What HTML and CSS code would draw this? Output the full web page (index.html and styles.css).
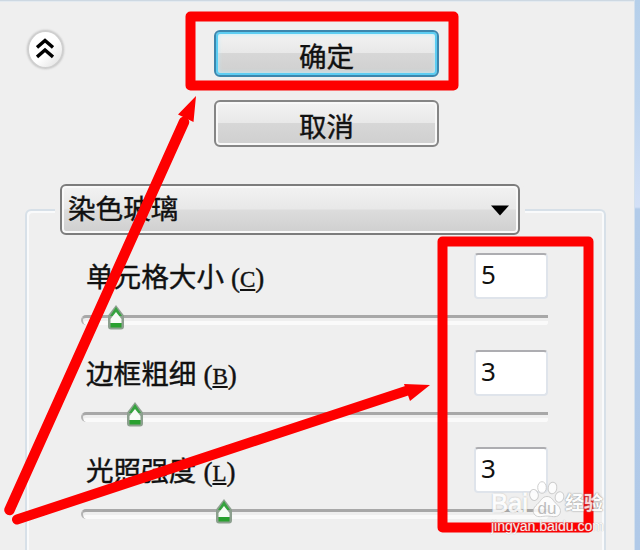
FILE: index.html
```html
<!DOCTYPE html>
<html lang="zh-CN">
<head>
    <meta charset="UTF-8">
    <meta name="viewport" content="width=device-width, initial-scale=1.0">
    <title>染色玻璃</title>
    <link rel="stylesheet" href="styles.css">
</head>
<body>
    <main class="panel">
        <header class="top">
            <button class="collapse" type="button">
                <svg width="18" height="21" viewBox="0 0 18 21" fill="none" stroke="#000" stroke-width="3.4">
                    <path d="M1 9.5 L9 2.5 L17 9.5 M1 19 L9 12 L17 19"/>
                </svg>
            </button>
            <div class="actions">
                <button class="btn btn-ok" type="button">确定</button>
                <button class="btn" type="button">取消</button>
            </div>
        </header>

        <section class="group">
            <div class="select">
                <span>染色玻璃</span>
                <svg width="18" height="11" viewBox="0 0 18 11"><path d="M0 0.5H18L9 10.5Z"/></svg>
            </div>

            <div class="option">
                <div class="option-head">
                    <span class="label">单元格大小<span class="key">(<u>C</u>)</span></span>
                    <span class="value">5</span>
                </div>
                <div class="slider" style="--pos: 35px">
                    <svg class="thumb" width="18" height="25" viewBox="0 0 18 25">
                        <path class="thumb-edge" d="M9 0 L17 10.5 V21.500 Q17 24.500 14 24.500 H4 Q1 24.500 1 21.500 V10.500 Z"/>
                        <path class="thumb-roof" d="M9 2 L15 11 H3 Z"/>
                        <path class="thumb-face" d="M9 7 L14.5 14 V18 H3.5 V14 Z"/>
                        <path class="thumb-base" d="M3.5 18 H14.5 V22.5 H3.5 Z"/>
                    </svg>
                </div>
            </div>

            <div class="option">
                <div class="option-head">
                    <span class="label">边框粗细<span class="key">(<u>B</u>)</span></span>
                    <span class="value">3</span>
                </div>
                <div class="slider" style="--pos: 54px">
                    <svg class="thumb" width="18" height="25" viewBox="0 0 18 25">
                        <path class="thumb-edge" d="M9 0 L17 10.5 V21.500 Q17 24.500 14 24.500 H4 Q1 24.500 1 21.500 V10.500 Z"/>
                        <path class="thumb-roof" d="M9 2 L15 11 H3 Z"/>
                        <path class="thumb-face" d="M9 7 L14.5 14 V18 H3.5 V14 Z"/>
                        <path class="thumb-base" d="M3.5 18 H14.5 V22.5 H3.5 Z"/>
                    </svg>
                </div>
            </div>

            <div class="option">
                <div class="option-head">
                    <span class="label">光照强度<span class="key">(<u>L</u>)</span></span>
                    <span class="value">3</span>
                </div>
                <div class="slider" style="--pos: 143px">
                    <svg class="thumb" width="18" height="25" viewBox="0 0 18 25">
                        <path class="thumb-edge" d="M9 0 L17 10.5 V21.500 Q17 24.500 14 24.500 H4 Q1 24.500 1 21.500 V10.500 Z"/>
                        <path class="thumb-roof" d="M9 2 L15 11 H3 Z"/>
                        <path class="thumb-face" d="M9 7 L14.5 14 V18 H3.5 V14 Z"/>
                        <path class="thumb-base" d="M3.5 18 H14.5 V22.5 H3.5 Z"/>
                    </svg>
                </div>
            </div>
        </section>
    </main>
    <div class="edge"></div>

    <!-- red frames and arrows over the panel -->
    <svg class="marks" width="640" height="550" viewBox="0 0 640 550">
        <g fill="none" stroke="#fe0000" stroke-linejoin="round" stroke-linecap="round">
            <rect x="190.5" y="16.5" width="263" height="69" stroke-width="10"/>
            <rect x="442.5" y="241.5" width="146" height="286" stroke-width="10"/>
            <path d="M9.500 510 L184 122" stroke-width="10.500"/>
            <path d="M17 519.500 L406 391" stroke-width="10"/>
        </g>
        <path d="M196 96 L178 114.500 L193.500 122 Z M430 385 L404 384 L410 401 Z" fill="#fe0000"/>
    </svg>

    <div class="watermark">
        <div class="wm-logo">
            <span class="wm-bai">Bai</span>
            <svg class="wm-paw" width="36" height="37" viewBox="0 0 36 37">
                <ellipse cx="5" cy="14" rx="4.300" ry="5.500" transform="rotate(-10 5 14)"/>
                <ellipse cx="13" cy="6.500" rx="4.300" ry="5.800"/>
                <ellipse cx="23.500" cy="7" rx="4.300" ry="5.800" transform="rotate(8 23.500 7)"/>
                <ellipse cx="30.500" cy="16" rx="4.300" ry="5.300" transform="rotate(15 30.500 16)"/>
                <path d="M18 15.500 C13 15.500 12 20 8 23.500 C4 27 3 31 6 34 C9 37 14 35 18 35 C22 35 27 37 30 34 C33 30 31 26 27.500 23 C24 20 23 15.500 18 15.500 Z"/>
                <text x="18" y="32.500">du</text>
            </svg>
            <span class="wm-cn">经验</span>
        </div>
        <div class="wm-url">jingyan.baidu.com</div>
    </div>
</body>
</html>
```
FILE: styles.css
```css
* {
    box-sizing: border-box;
}
body {
    margin: 0;
    width: 640px;
    height: 550px;
    display: flex;
    position: relative;
    overflow: hidden;
    background-color: #efefef;
    font-family: "Noto Sans CJK SC", sans-serif;
    font-size: 27.6px;
    color: #111;
}
button {
    font: inherit;
    color: inherit;
    padding: 0;
}
.panel {
    width: 634px;
    height: 550px;
    overflow: hidden;
    border-top: 1px solid #cdd8e2;
    box-shadow: inset 0 1px #e3eaf0;
    -webkit-text-stroke: 0.4px #111;
}
.edge {
    width: 6px;
    border-left: 1px solid #d3e0ed;
    background: linear-gradient(#b5cfea 0, #bdd4ee 100px, #d3e0f6 207px, #b2cbe9 209px, #b0c9e8);
}
.top {
    display: flex;
    align-items: flex-start;
    padding: 29px 0 0 27px;
    height: 183px;
}
.collapse {
    display: flex;
    align-items: center;
    justify-content: center;
    width: 37px;
    height: 39px;
    margin-right: 150px;
    padding: 0 2px 2px 0;
    border: 2px solid #cfcfcf;
    border-radius: 50%;
    background: linear-gradient(135deg, #fff 55%, #dedede);
    box-shadow: 0 0 2px #bbb;
}
.actions {
    display: flex;
    flex-direction: column;
    gap: 23px;
}
.btn {
    width: 225px;
    height: 47px;
    border: 2px solid #858585;
    border-radius: 6px;
    background: linear-gradient(#f3f3f3, #e8e8e8 48%, #d7d7d7 50%, #cfcfcf);
    box-shadow: inset 0 0 0 2px #f8f8f8;
    line-height: 46px;
}
.btn-ok {
    border-color: #3c86ad;
    box-shadow: inset 0 0 0 2px #5ccdf2, inset 0 0 4px 2px #bdeefa;
}
.group {
    position: relative;
    margin-left: 25px;
    width: 581px;
    height: 366px;
    padding-left: 35px;
}
/* outline starts at the middle of the select and runs off the panel */
.group::before {
    content: "";
    position: absolute;
    z-index: -1;
    left: 0;
    right: 0;
    top: 25px;
    bottom: 0;
    border: 2px solid #d7e0e8;
    border-bottom: 0;
    border-radius: 6px 6px 0 0;
    box-shadow: inset 2px 2px #f9fafb, inset -2px 0 #f9fafb;
}
.select {
    display: flex;
    align-items: center;
    justify-content: space-between;
    width: 460px;
    height: 51px;
    margin-bottom: 18px;
    padding: 0 9px 4px 6px;
    border: 2px solid #7c7c7c;
    border-radius: 6px;
    background: linear-gradient(#f2f2f2, #e8e8e8 48%, #dcdcdc 52%, #cfcfcf);
    box-shadow: inset 0 0 0 2px #f9f9f9, 5px 0 #efefef, -5px 0 #efefef;
    line-height: 43px;
}
.select svg {
    margin-top: 6px;
}
.option {
    height: 97px;
    padding-left: 21px;
}
.option:last-child {
    height: 80px;
}
.option-head {
    display: flex;
    justify-content: space-between;
    width: 467px;
    height: 46px;
    padding-left: 5px;
}
.label {
    line-height: 45px;
    white-space: nowrap;
}
.key {
    margin-left: 7px;
    font-family: "Liberation Serif", serif;
    font-size: 27px;
}
.key u {
    font-size: 23px;
    text-decoration-thickness: 2px;
    text-underline-offset: 2px;
}
.value {
    width: 74px;
    height: 46px;
    padding-left: 5px;
    border: 2px solid #dfe4eb;
    border-top-color: #adadb1;
    border-radius: 4px;
    background-color: #fff;
    font-family: "Noto Sans", sans-serif;
    font-size: 26px;
    line-height: 38px;
    -webkit-text-stroke: 0;
}
.slider {
    position: relative;
    width: 467px;
    height: 10px;
    margin-top: 16px;
    border-top: 3px solid #a8a8a8;
    border-left: 2px solid #b4b4b4;
    border-radius: 7px 0 4px 7px;
    box-shadow: inset 0 3px #efefef, inset 0 -4px #fafafa;
}
.thumb {
    position: absolute;
    left: calc(var(--pos) - 11px);
    top: -13px;
}
.thumb-edge {
    fill: #8da08f;
}
.thumb-roof {
    fill: #35a33e;
}
.thumb-face {
    fill: #f7fbf6;
}
.thumb-base {
    fill: #29a02f;
}
.marks {
    position: absolute;
    left: 0;
    top: 0;
}
.watermark {
    position: absolute;
    left: 491px;
    top: 480px;
    color: #fff;
    font-family: "Liberation Sans", sans-serif;
}
.wm-logo {
    display: flex;
    align-items: flex-end;
    height: 38px;
    opacity: 0.85;
    text-shadow: 0 0 2px #888, 0 0 1px #999;
}
.wm-bai {
    width: 38px;
    height: 38px;
    padding-top: 6px;
    font-size: 25.5px;
    line-height: 34px;
    -webkit-text-stroke: 1px #fff;
}
.wm-paw {
    fill: #fff;
    stroke: #c8c8c8;
    stroke-width: 1;
}
.wm-paw text {
    fill: #b5b5b5;
    stroke: none;
    font-size: 17px;
    text-anchor: middle;
    text-shadow: none;
}
.wm-cn {
    height: 38px;
    padding-top: 3px;
    font-family: "Noto Sans CJK SC", sans-serif;
    font-size: 19px;
    font-weight: bold;
    line-height: 37px;
}
.wm-url {
    font-size: 14px;
    line-height: 16px;
    opacity: 0.9;
    text-shadow: 0 0 1px #999;
}
```
